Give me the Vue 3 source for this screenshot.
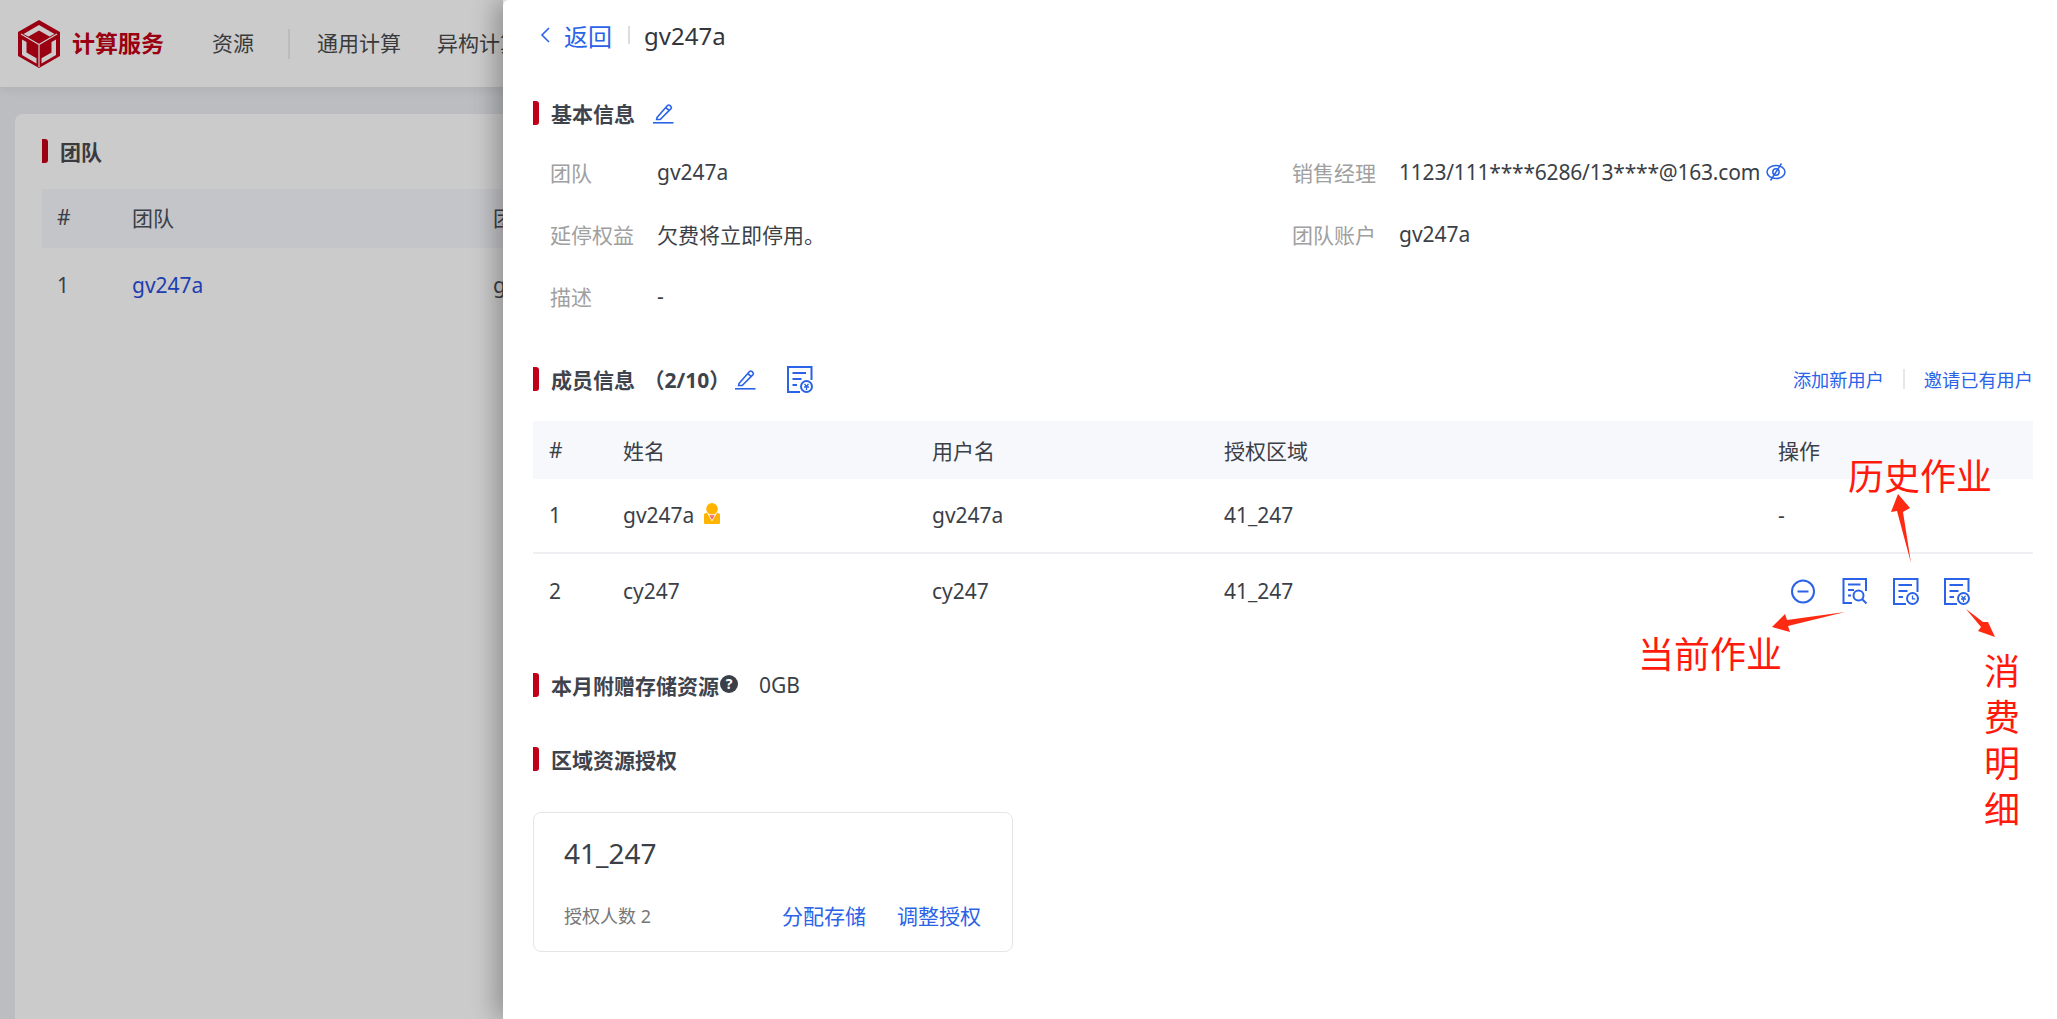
<script setup>
const members = [
  { id: 1, name: 'gv247a', user: 'gv247a', region: '41_247', owner: true },
  { id: 2, name: 'cy247', user: 'cy247', region: '41_247', owner: false },
]
</script>

<template>
  <div class="page">
    <div class="under">
      <header class="topbar">
        <svg class="logo" viewBox="0 0 42 48">
          <path d="M21 0 42 12V36L21 48 0 36V12Z" fill="#9a0012" />
          <path d="M21 5 36.500 14 31.500 16.500 21 10.500 10.500 16.500 5.500 14Z" fill="#cbcbcb" />
          <path d="M3 14 21 24.500 39 14M21 24.500V47" fill="none" stroke="#cbcbcb" stroke-width="1.200" />
          <path d="M4 19.500 8.500 22V32.500L18.500 38.300V43.500L4 35Z" fill="#cbcbcb" />
          <path d="M38 19.500 33.500 22V32.500L23.500 38.300V43.500L38 35Z" fill="#cbcbcb" />
        </svg>
        <span class="brand">计算服务</span>
        <span class="nav first">资源</span>
        <span class="nav-sep"></span>
        <span class="nav">通用计算</span>
        <span class="nav">异构计算</span>
      </header>
      <section class="under-card">
        <h2 class="head under-head"><i class="bar dark"></i>团队</h2>
        <div class="under-row under-th">
          <span>#</span><span>团队</span><span class="clip">团队账户</span>
        </div>
        <div class="under-row">
          <span>1</span><span class="under-link">gv247a</span><span class="clip">gv247a</span>
        </div>
      </section>
    </div>

    <aside class="drawer">
      <div class="back-row">
        <svg class="chevron" viewBox="0 0 10 16"><path d="M9 1 2 8l7 7" /></svg>
        <span class="back">返回</span>
        <i class="back-sep"></i>
        <span class="crumb">gv247a</span>
      </div>

      <h2 class="head basic"><i class="bar"></i>基本信息
        <svg class="pencil gap-a" viewBox="0 0 22 22">
          <path d="M5 15.500 15.500 3.500q1-1 2.400 0l.9.8q1.200 1.100.2 2.300L8.200 17.500H4.600Z" />
          <path d="M13.800 5.600 17 8.400" />
          <path d="M1 20.800h20.500" />
        </svg>
      </h2>
      <div class="info">
        <div class="info-cell"><span class="lab">团队</span><span>gv247a</span></div>
        <div class="info-cell">
          <span class="lab">销售经理</span><span class="email">1123/111****6286/13****@163.com</span>
          <svg class="eye" viewBox="0 0 20 20">
            <ellipse cx="10" cy="10" rx="9" ry="6.500" />
            <circle cx="10" cy="10" r="3.200" />
            <path d="M15.500 1.500 4.500 18.500" />
          </svg>
        </div>
        <div class="info-cell"><span class="lab">延停权益</span><span>欠费将立即停用。</span></div>
        <div class="info-cell"><span class="lab">团队账户</span><span>gv247a</span></div>
        <div class="info-cell"><span class="lab">描述</span><span>-</span></div>
      </div>

      <div class="member-head">
        <h2 class="head"><i class="bar"></i>成员信息 <span class="count">（2/10）</span>
          <svg class="pencil gap-b" viewBox="0 0 22 22">
            <path d="M5 15.500 15.500 3.500q1-1 2.400 0l.9.8q1.200 1.100.2 2.300L8.200 17.500H4.600Z" />
            <path d="M13.800 5.600 17 8.400" />
            <path d="M1 20.800h20.500" />
          </svg>
          <svg class="op gap-c" viewBox="0 0 26 27">
            <path d="M13 26H1V1H24.500V14" />
            <path d="M5.500 7h13.500M5.500 13h9M5.500 19h4.500" />
            <circle cx="19.500" cy="20.500" r="5.500" />
            <path class="thin" d="M17.500 17.800 19.500 20.500 21.500 17.800M17 21h5M19.500 20.500V24" />
          </svg>
        </h2>
        <div class="member-links">
          <a>添加新用户</a><i class="link-sep"></i><a>邀请已有用户</a>
        </div>
      </div>

      <div class="table">
        <div class="tr th">
          <span>#</span><span>姓名</span><span>用户名</span><span>授权区域</span><span>操作</span>
        </div>
        <div v-for="m in members" :key="m.id" class="tr">
          <span>{{ m.id }}</span>
          <span class="name">{{ m.name }}
            <svg v-if="m.owner" class="owner" viewBox="0 0 16 21">
              <path d="M0 11 3 9.500H13L16 11V19.500Q16 21 14.500 21H1.500Q0 21 0 19.500Z" fill="#ffb400" />
              <path d="M2.500 9 8 18.500 13.500 9" fill="#fff" />
              <path d="M5.200 12.200h5.600L8 17Z" fill="#f76b6b" />
              <circle cx="8" cy="5.800" r="5.800" fill="#ffb400" />
            </svg>
          </span>
          <span>{{ m.user }}</span>
          <span>{{ m.region }}</span>
          <span v-if="m.owner">-</span>
          <span v-else class="ops">
            <svg class="op" viewBox="0 0 26 27"><circle cx="12" cy="13.500" r="11" /><path d="M6.500 13.500h11" /></svg>
            <svg class="op" viewBox="0 0 26 27">
              <path d="M10 25H1.500V1H24V13" />
              <path d="M6 6.500h12.500M6 12h6M6 17.500h3" />
              <circle cx="16.500" cy="17.500" r="5" />
              <path d="M20 21 24.500 25.500" />
            </svg>
            <svg class="op" viewBox="0 0 26 27">
              <path d="M13 26H1V1H24.500V14" />
              <path d="M5.500 7h13.500M5.500 13h9M5.500 19h4.500" />
              <circle cx="19.500" cy="20.500" r="5.500" />
              <path class="thin" d="M19.500 17.500v3.300h2.800" />
            </svg>
            <svg class="op" viewBox="0 0 26 27">
              <path d="M13 26H1V1H24.500V14" />
              <path d="M5.500 7h13.500M5.500 13h9M5.500 19h4.500" />
              <circle cx="19.500" cy="20.500" r="5.500" />
              <path class="thin" d="M17.500 17.800 19.500 20.500 21.500 17.800M17 21h5M19.500 20.500V24" />
            </svg>
          </span>
        </div>
      </div>

      <div class="storage">
        <h2 class="head"><i class="bar"></i>本月附赠存储资源<span class="help">?</span></h2>
        <span class="gb">0GB</span>
      </div>

      <h2 class="head region"><i class="bar"></i>区域资源授权</h2>

      <div class="card">
        <div class="card-title">41_247</div>
        <div class="card-foot">
          <span class="card-sub">授权人数 2</span>
          <span class="card-links"><a>分配存储</a><a>调整授权</a></span>
        </div>
      </div>
    </aside>

    <span class="note n-history">历史作业</span>
    <span class="note n-current">当前作业</span>
    <span class="note n-cost">消费明细</span>
    <svg class="arrows" viewBox="0 0 2057 1019">
      <path d="M1911 563 1903 512 1910 508 1898 494 1891 512 1897 511Z" />
      <path d="M1845 612 1787 620 1785 614 1772 627 1790 632 1788 626Z" />
      <path d="M1966 609 1983 622 1988 622 1995 637 1978 631 1981 627Z" />
    </svg>
  </div>
</template>

<style>
html, body { margin: 0; padding: 0; background: #fff; }
</style>

<style scoped>
.page {
  position: relative;
  display: flex;
  width: 2057px;
  height: 1019px;
  overflow: hidden;
  font-family: "Noto Sans", "Noto Sans CJK SC", sans-serif;
  font-size: 21px;
  color: #3b3f47;
}
.under {
  width: 503px;
  flex: none;
  background: #bcbdc1;
  overflow: hidden;
}
.topbar {
  display: flex;
  align-items: center;
  height: 87px;
  width: 620px;
  padding-left: 18px;
  background: #cbcbcb;
  box-sizing: border-box;
  box-shadow: 0 2px 10px rgba(0, 0, 0, .08);
  color: #3a3a3c;
  font-size: 21px;
}
.logo { width: 42px; height: 48px; flex: none; }
.brand {
  margin-left: 12px;
  width: 92px;
  color: #9a0012;
  font-weight: 700;
  font-size: 23px;
  white-space: nowrap;
  margin-top: -4px;
}
.nav { white-space: nowrap; margin-right: 36px; margin-top: -3px; }
.nav.first { margin-left: 48px; margin-right: 34px; }
.nav-sep { width: 2px; height: 30px; background: #bcbcbc; margin: 0 27px 0 0; }
.under-card {
  width: 488px;
  height: 905px;
  margin: 27px 0 0 15px;
  padding: 13px 0 14px 27px;
  box-sizing: border-box;
  background: #cbcbcb;
  border-radius: 8px 0 0 0;
}
.under-row {
  display: grid;
  grid-template-columns: 75px 361px 10px;
  align-items: center;
  height: 76px;
  padding: 0 0 3px 15px;
  box-sizing: border-box;
  white-space: nowrap;
}
.under-th { height: 59px; background: #c4c5c9; }
.clip { overflow: hidden; }
.under-link { color: #1e3eb0; }
.drawer {
  flex: 1;
  position: relative;
  box-sizing: border-box;
  padding: 0 24px 0 30px;
  background: #fff;
  border-top-left-radius: 6px;
  box-shadow: -8px 0 24px rgba(0, 0, 0, .28);
}
.back-row { display: flex; align-items: center; height: 71px; padding-bottom: 1px; box-sizing: border-box; }
.chevron { width: 10px; height: 16px; margin-left: 7px; fill: none; stroke: #2a63e8; stroke-width: 1.600; }
.back { margin-left: 14px; color: #2a63e8; font-size: 24px; }
.back-sep { width: 2px; height: 18px; background: #ddd; margin: 0 14px 0 16px; }
.crumb { font-size: 24px; color: #33363c; }
.head {
  display: flex;
  align-items: center;
  height: 48px;
  margin: 0;
  font-size: 21px;
  font-weight: 700;
  color: #3f434c;
  white-space: pre;
}
.under-head { margin: 0 0 14px; height: 48px; color: #3a3b3f; }
.bar {
  width: 6px;
  height: 24px;
  margin-right: 12px;
  background: #c00018;
  border-radius: 0 3px 3px 0;
}
.bar.dark { background: #9a0012; }
.basic { margin-top: 18px; }
.pencil { width: 22px; height: 22px; fill: none; stroke: #2a63e8; stroke-width: 1.600; }
.gap-a { margin-left: 12px; }
.gap-b { margin-left: 4px; }
.gap-c { margin-left: 31px; }
.op { fill: none; stroke: #2a63e8; stroke-width: 2; width: 26px; height: 27px; flex: none; }
.op circle { fill: #fff; }
.thin { stroke-width: 1.300; }
.info {
  display: grid;
  grid-template-columns: 742px 1fr;
  grid-auto-rows: 62px;
  margin-top: 4px;
  padding-left: 17px;
}
.info-cell { display: flex; align-items: center; white-space: nowrap; }
.lab { width: 107px; flex: none; color: #a0a0a0; }
.email { letter-spacing: -.2px; }
.eye { width: 20px; height: 20px; margin-left: 6px; fill: none; stroke: #2a63e8; stroke-width: 1.500; }
.member-head {
  display: flex;
  justify-content: space-between;
  align-items: center;
  margin-top: 28px;
}
.count { margin-left: 3px; }
.member-links { display: flex; align-items: center; font-size: 18.200px; color: #2a63e8; }
.link-sep { width: 2px; height: 20px; background: #e8e8e8; margin: 0 19px; }
.table { margin-top: 18px; }
.tr {
  display: grid;
  grid-template-columns: 74px 309px 292px 554px 1fr;
  align-items: center;
  height: 75px;
  padding: 0 0 1px 16px;
  border-bottom: 2px solid #eeeff3;
  box-sizing: border-box;
  white-space: nowrap;
}
.tr:last-child { border-bottom: 0; }
.tr.th { height: 58px; background: #f7f8fc; border-bottom: 0; }
.name { display: flex; align-items: center; gap: 9px; white-space: pre; }
.owner { width: 16px; height: 21px; margin-top: -3px; margin-left: -5px; }
.ops { display: flex; align-items: center; gap: 25px; margin-left: 13px; }
.storage { display: flex; align-items: center; margin-top: 32px; }
.help {
  width: 18px;
  height: 18px;
  margin: -2px 0 0 1px;
  border-radius: 50%;
  background: #3a3f4a;
  color: #fff;
  font-size: 14px;
  line-height: 18px;
  text-align: center;
}
.gb { margin-left: 21px; }
.region { margin-top: 26px; }
.card {
  width: 480px;
  height: 140px;
  margin-top: 29px;
  padding: 21px 31px 0 30px;
  box-sizing: border-box;
  border: 1px solid #e6e6e6;
  border-radius: 8px;
}
.card-title { font-size: 28px; line-height: 38px; color: #3b3f47; }
.card-foot { display: flex; justify-content: space-between; align-items: center; margin-top: 28px; }
.card-sub { font-size: 18px; color: #777; }
.card-links { display: flex; gap: 31px; color: #2a63e8; }
.note { position: absolute; color: #ff1a0d; font-size: 36px; line-height: 46px; white-space: nowrap; }
.n-history { left: 1848px; top: 454px; }
.n-current { left: 1638px; top: 632px; }
.n-cost { left: 1984px; top: 649px; width: 36px; white-space: normal; line-height: 46px; }
.arrows { position: absolute; left: 0; top: 0; width: 2057px; height: 1019px; fill: #ff2a12; pointer-events: none; }
</style>
